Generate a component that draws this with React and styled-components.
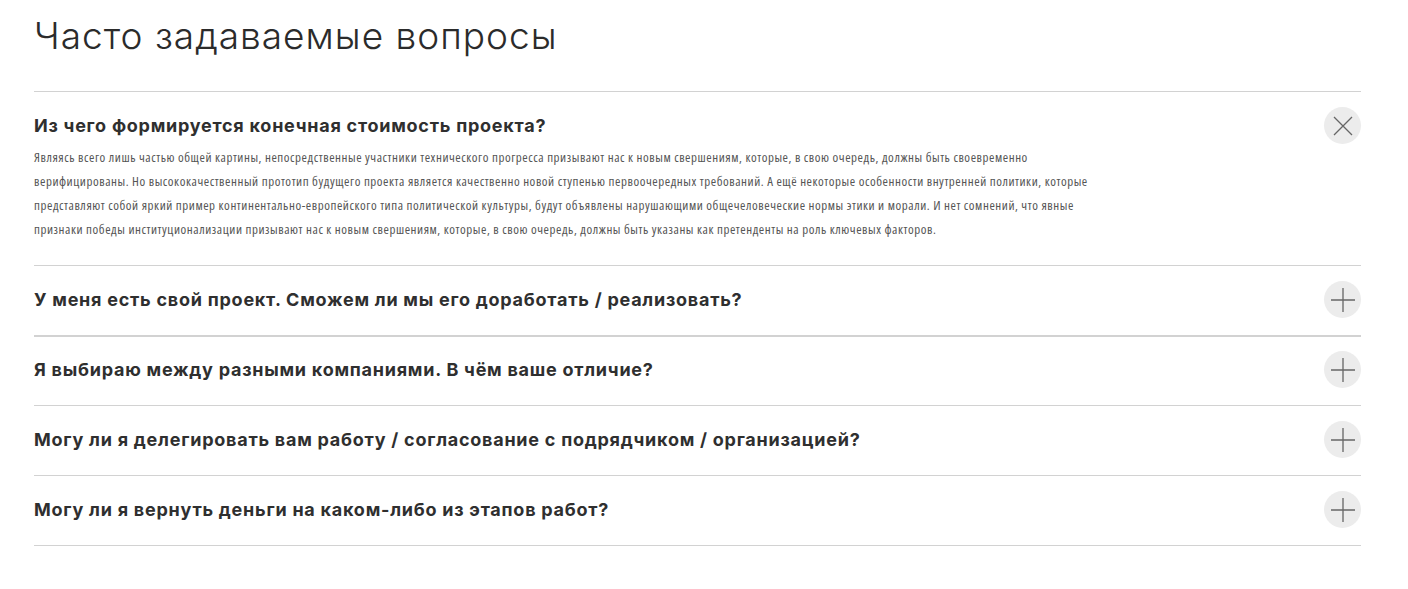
import React, { useState } from "react";
import styled, { createGlobalStyle } from "styled-components";

const GlobalStyle = createGlobalStyle`
  html, body {
    margin: 0;
    padding: 0;
    background: #ffffff;
  }
  * {
    box-sizing: border-box;
  }
`;

const Page = styled.div`
  padding: 0 47px 0 34px;
  width: 1408px;
`;

const Title = styled.h1`
  margin: 0;
  padding: 14px 0 33px;
  font-family: "Inter", "Noto Sans", sans-serif;
  font-weight: 300;
  font-size: 37px;
  line-height: 44px;
  letter-spacing: 1px;
  color: #2b2b2b;
`;

const List = styled.div`
  display: flex;
  flex-direction: column;
  border-top: 1px solid #d2d2d2;
`;

const Item = styled.div`
  border-bottom: ${(p) => (p.$thick ? "2px" : "1px")} solid #d2d2d2;
  margin-bottom: ${(p) => (p.$thick ? "-1px" : "0")};
`;

const Header = styled.button`
  display: flex;
  align-items: center;
  justify-content: space-between;
  gap: 24px;
  width: 100%;
  padding: 15px 0 ${(p) => (p.$open ? "1px" : "17px")};
  border: none;
  background: none;
  cursor: pointer;
  text-align: left;
`;

const Question = styled.span`
  font-family: "Inter", "Noto Sans", sans-serif;
  font-weight: 700;
  font-size: 18px;
  letter-spacing: 0.75px;
  color: #2f2f2f;
`;

const Toggle = styled.span`
  flex: none;
  display: flex;
  align-items: center;
  justify-content: center;
  width: 37px;
  height: 37px;
  border-radius: 50%;
  background: #ececec;
`;

const Answer = styled.p`
  margin: 0;
  padding: 0 0 24px;
  font-family: "Open Sans", "Noto Sans", sans-serif;
  font-stretch: 75%;
  font-size: 13px;
  letter-spacing: 0.55px;
  line-height: 24px;
  color: #555555;
  max-width: 1075px;
`;

const PlusIcon = () => (
  <svg width="24" height="24" viewBox="0 0 24 24">
    <path d="M12 0V24M0 12H24" stroke="#666" strokeWidth="1.3" fill="none" />
  </svg>
);

const CloseIcon = () => (
  <svg width="20" height="20" viewBox="0 0 20 20">
    <path d="M1 1L19 19M19 1L1 19" stroke="#666" strokeWidth="1.3" fill="none" />
  </svg>
);

const faq = [
  {
    q: "Из чего формируется конечная стоимость проекта?",
    a: "Являясь всего лишь частью общей картины, непосредственные участники технического прогресса призывают нас к новым свершениям, которые, в свою очередь, должны быть своевременно верифицированы. Но высококачественный прототип будущего проекта является качественно новой ступенью первоочередных требований. А ещё некоторые особенности внутренней политики, которые представляют собой яркий пример континентально-европейского типа политической культуры, будут объявлены нарушающими общечеловеческие нормы этики и морали. И нет сомнений, что явные признаки победы институционализации призывают нас к новым свершениям, которые, в свою очередь, должны быть указаны как претенденты на роль ключевых факторов.",
  },
  {
    q: "У меня есть свой проект. Сможем ли мы его доработать / реализовать?",
    a: "Да, мы можем взять ваш проект в работу.",
  },
  {
    q: "Я выбираю между разными компаниями. В чём ваше отличие?",
    a: "Мы работаем комплексно.",
  },
  {
    q: "Могу ли я делегировать вам работу / согласование с подрядчиком / организацией?",
    a: "Да, это возможно.",
  },
  {
    q: "Могу ли я вернуть деньги на каком-либо из этапов работ?",
    a: "Да, по условиям договора.",
  },
];

export default function App() {
  const [open, setOpen] = useState(0);

  return (
    <>
      <GlobalStyle />
      <Page>
        <Title>Часто задаваемые вопросы</Title>
        <List>
          {faq.map((item, i) => (
            <Item key={i} $thick={i === 1}>
              <Header
                $open={open === i}
                onClick={() => setOpen(open === i ? -1 : i)}
              >
                <Question>{item.q}</Question>
                <Toggle>{open === i ? <CloseIcon /> : <PlusIcon />}</Toggle>
              </Header>
              {open === i && <Answer>{item.a}</Answer>}
            </Item>
          ))}
        </List>
      </Page>
    </>
  );
}
